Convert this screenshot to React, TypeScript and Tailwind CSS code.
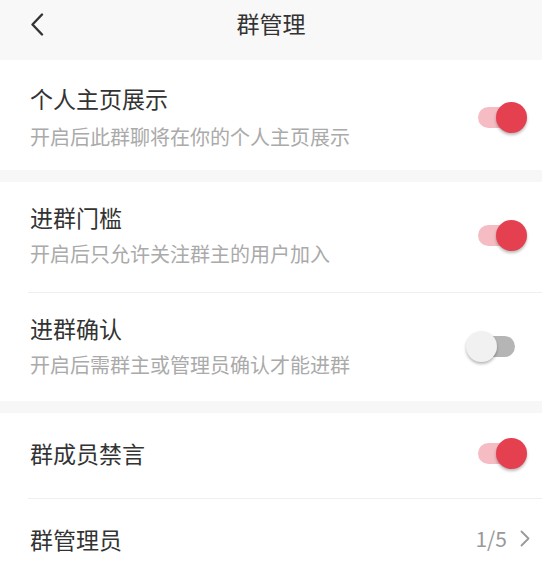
import React from 'react'

const FONT = { fontFamily: '"Noto Sans CJK SC", "Noto Sans", sans-serif' }

/* Material-style switch: short track, oversized knob that overhangs both ends. */
function Toggle({ on }: { on: boolean }) {
  return (
    <div className={`relative w-[37px] h-[21px] rounded-full ${on ? 'bg-[#f5bcc3]' : 'bg-[#b5b5b5]'}`}>
      <div
        className={`absolute top-[-5px] w-[31px] h-[31px] rounded-full shadow-[0_2px_3px_rgba(0,0,0,0.28)] ${
          on ? 'right-[-12px] bg-[#e5404f]' : 'left-[-12px] bg-[#f1f1f1]'
        }`}
      />
    </div>
  )
}

interface RowProps {
  title: string
  sub?: string
  on: boolean
  /** Height + small vertical nudge so the text sits where the design has it. */
  box: string
  gap?: string
}

function Row({ title, sub, on, box, gap = 'gap-[8px]' }: RowProps) {
  return (
    <div className={`flex items-center justify-between bg-white pl-[30px] pr-[27px] ${box}`}>
      <div className={`flex flex-col ${gap}`}>
        <div className="text-[23px] leading-[30px] text-[#333]">{title}</div>
        {sub && <div className="text-[20px] leading-[28px] text-[#aaaaaa]">{sub}</div>}
      </div>
      <Toggle on={on} />
    </div>
  )
}

const Divider = () => (
  <div className="bg-white pl-[28px]">
    <div className="h-px bg-[#efefef]" />
  </div>
)

const Gap = ({ h }: { h: string }) => <div className={`${h} bg-[#f7f7f7]`} />

export default function App() {
  return (
    <div className="w-[542px] h-[579px] overflow-hidden bg-white" style={FONT}>
      <header className="relative flex justify-center h-[60px] pt-[8px] bg-[#f8f8f8]">
        <svg className="absolute left-[30px] top-[13px]" width="14" height="23" viewBox="0 0 14 23" fill="none">
          <path d="M12 1.5 L2.5 11.5 L12 21.5" stroke="#333" strokeWidth="2.4" strokeLinecap="round" strokeLinejoin="round" />
        </svg>
        <div className="text-[23px] text-[#333] leading-[30px]">群管理</div>
      </header>

      <Row title="个人主页展示" sub="开启后此群聊将在你的个人主页展示" on box="h-[110px] pt-[4px]" gap="gap-[10px]" />
      <Gap h="h-[12px]" />

      <Row title="进群门槛" sub="开启后只允许关注群主的用户加入" on box="h-[110px] pb-[4px]" />
      <Divider />
      <Row title="进群确认" sub="开启后需群主或管理员确认才能进群" on={false} box="h-[108px] pb-[2px]" />
      <Gap h="h-[12px]" />

      <Row title="群成员禁言" on box="h-[85px] pb-[5px]" />
      <Divider />
      <div className="flex items-center justify-between bg-white pl-[30px] pr-[12px] h-[85px] pb-[6px]">
        <div className="text-[23px] leading-[30px] text-[#333]">群管理员</div>
        <div className="flex items-center gap-[13px]">
          <span className="text-[21px] text-[#999]">1/5</span>
          <svg width="10" height="17" viewBox="0 0 10 17" fill="none">
            <path d="M1.5 1.5 L8.5 8.5 L1.5 15.5" stroke="#999" strokeWidth="1.8" strokeLinecap="round" strokeLinejoin="round" />
          </svg>
        </div>
      </div>
    </div>
  )
}
